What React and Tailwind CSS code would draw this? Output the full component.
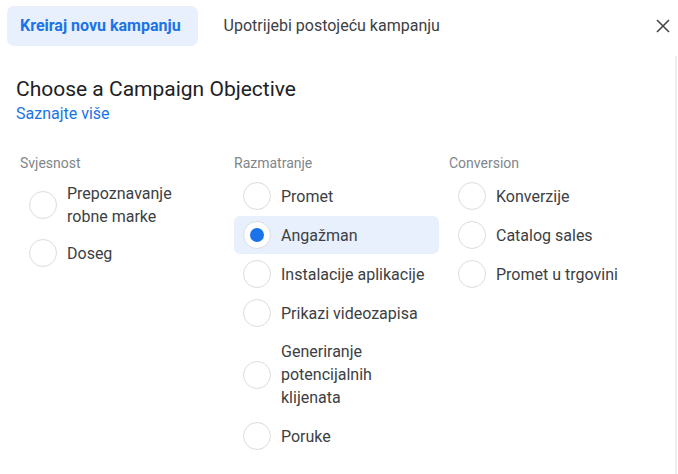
import React, { useState } from 'react'

const columns = [
  {
    title: 'Svjesnost',
    items: ['Prepoznavanje\nrobne marke', 'Doseg'],
  },
  {
    title: 'Razmatranje',
    items: [
      'Promet',
      'Angažman',
      'Instalacije aplikacije',
      'Prikazi videozapisa',
      'Generiranje\npotencijalnih\nklijenata',
      'Poruke',
    ],
  },
  {
    title: 'Conversion',
    items: ['Konverzije', 'Catalog sales', 'Promet u trgovini'],
  },
]

const Radio = ({ checked }) => (
  <span className="flex h-[28px] w-[28px] shrink-0 items-center justify-center rounded-full border border-[#dadce0] bg-white">
    {checked && <span className="h-[14px] w-[14px] rounded-full bg-[#1a73e8]" />}
  </span>
)

const App = () => {
  const [selected, setSelected] = useState('Angažman')

  return (
    <div className="h-[474px] w-[678px] overflow-hidden bg-white font-['Roboto',sans-serif]">
      {/* header tabs */}
      <div className="flex h-[56px] items-start pl-[7px] pr-[8px] pt-[6px]">
        <button className="h-[40px] rounded-[7px] bg-[#e8f0fe] pl-[13px] pr-[17px] text-[16px] font-bold text-[#1a73e8]">
          Kreiraj novu kampanju
        </button>
        <button className="ml-[13px] h-[40px] px-[13px] text-[16px] text-[#3c4043]">
          Upotrijebi postojeću kampanju
        </button>
        <button className="ml-auto mt-[13px] flex h-[14px] w-[14px] items-center justify-center">
          <svg width="14" height="14" viewBox="0 0 14 14">
            <path d="M1 1L13 13M13 1L1 13" stroke="#444746" strokeWidth="1.6" />
          </svg>
        </button>
      </div>

      <div className="flex h-[418px]">
        <div className="flex-1 pl-[16px] pt-[19px]">
          <h1 className="text-[21px] leading-[28px] text-[#202124]">Choose a Campaign Objective</h1>
          <a className="block text-[16px] leading-[22px] text-[#1a73e8]">Saznajte više</a>

          <div className="mt-[29px] flex pl-[4px]">
            {columns.map((col, i) => (
              <div key={col.title} className={i === 0 ? 'w-[214px]' : i === 1 ? 'w-[215px]' : 'flex-1'}>
                <div className="mb-[5px] text-[14px] leading-[18px] text-[#80868b]">{col.title}</div>
                {col.items.map((item) => (
                  <div
                    key={item}
                    onClick={() => setSelected(item)}
                    className={`my-px flex w-[205px] cursor-pointer items-center gap-[10px] rounded-[6px] pl-[9px] ${
                      item.split('\n').length > 2 ? 'py-[7px]' : 'py-[5px]'
                    } ${selected === item ? 'bg-[#e8f0fe]' : ''}`}
                  >
                    <Radio checked={selected === item} />
                    <span className="whitespace-pre-line text-[16px] leading-[23px] text-[#3c4043]">{item}</span>
                  </div>
                ))}
              </div>
            ))}
          </div>
        </div>
        <div className="mr-px w-[2px] bg-[#efefef]" />
      </div>
    </div>
  )
}

export default App
